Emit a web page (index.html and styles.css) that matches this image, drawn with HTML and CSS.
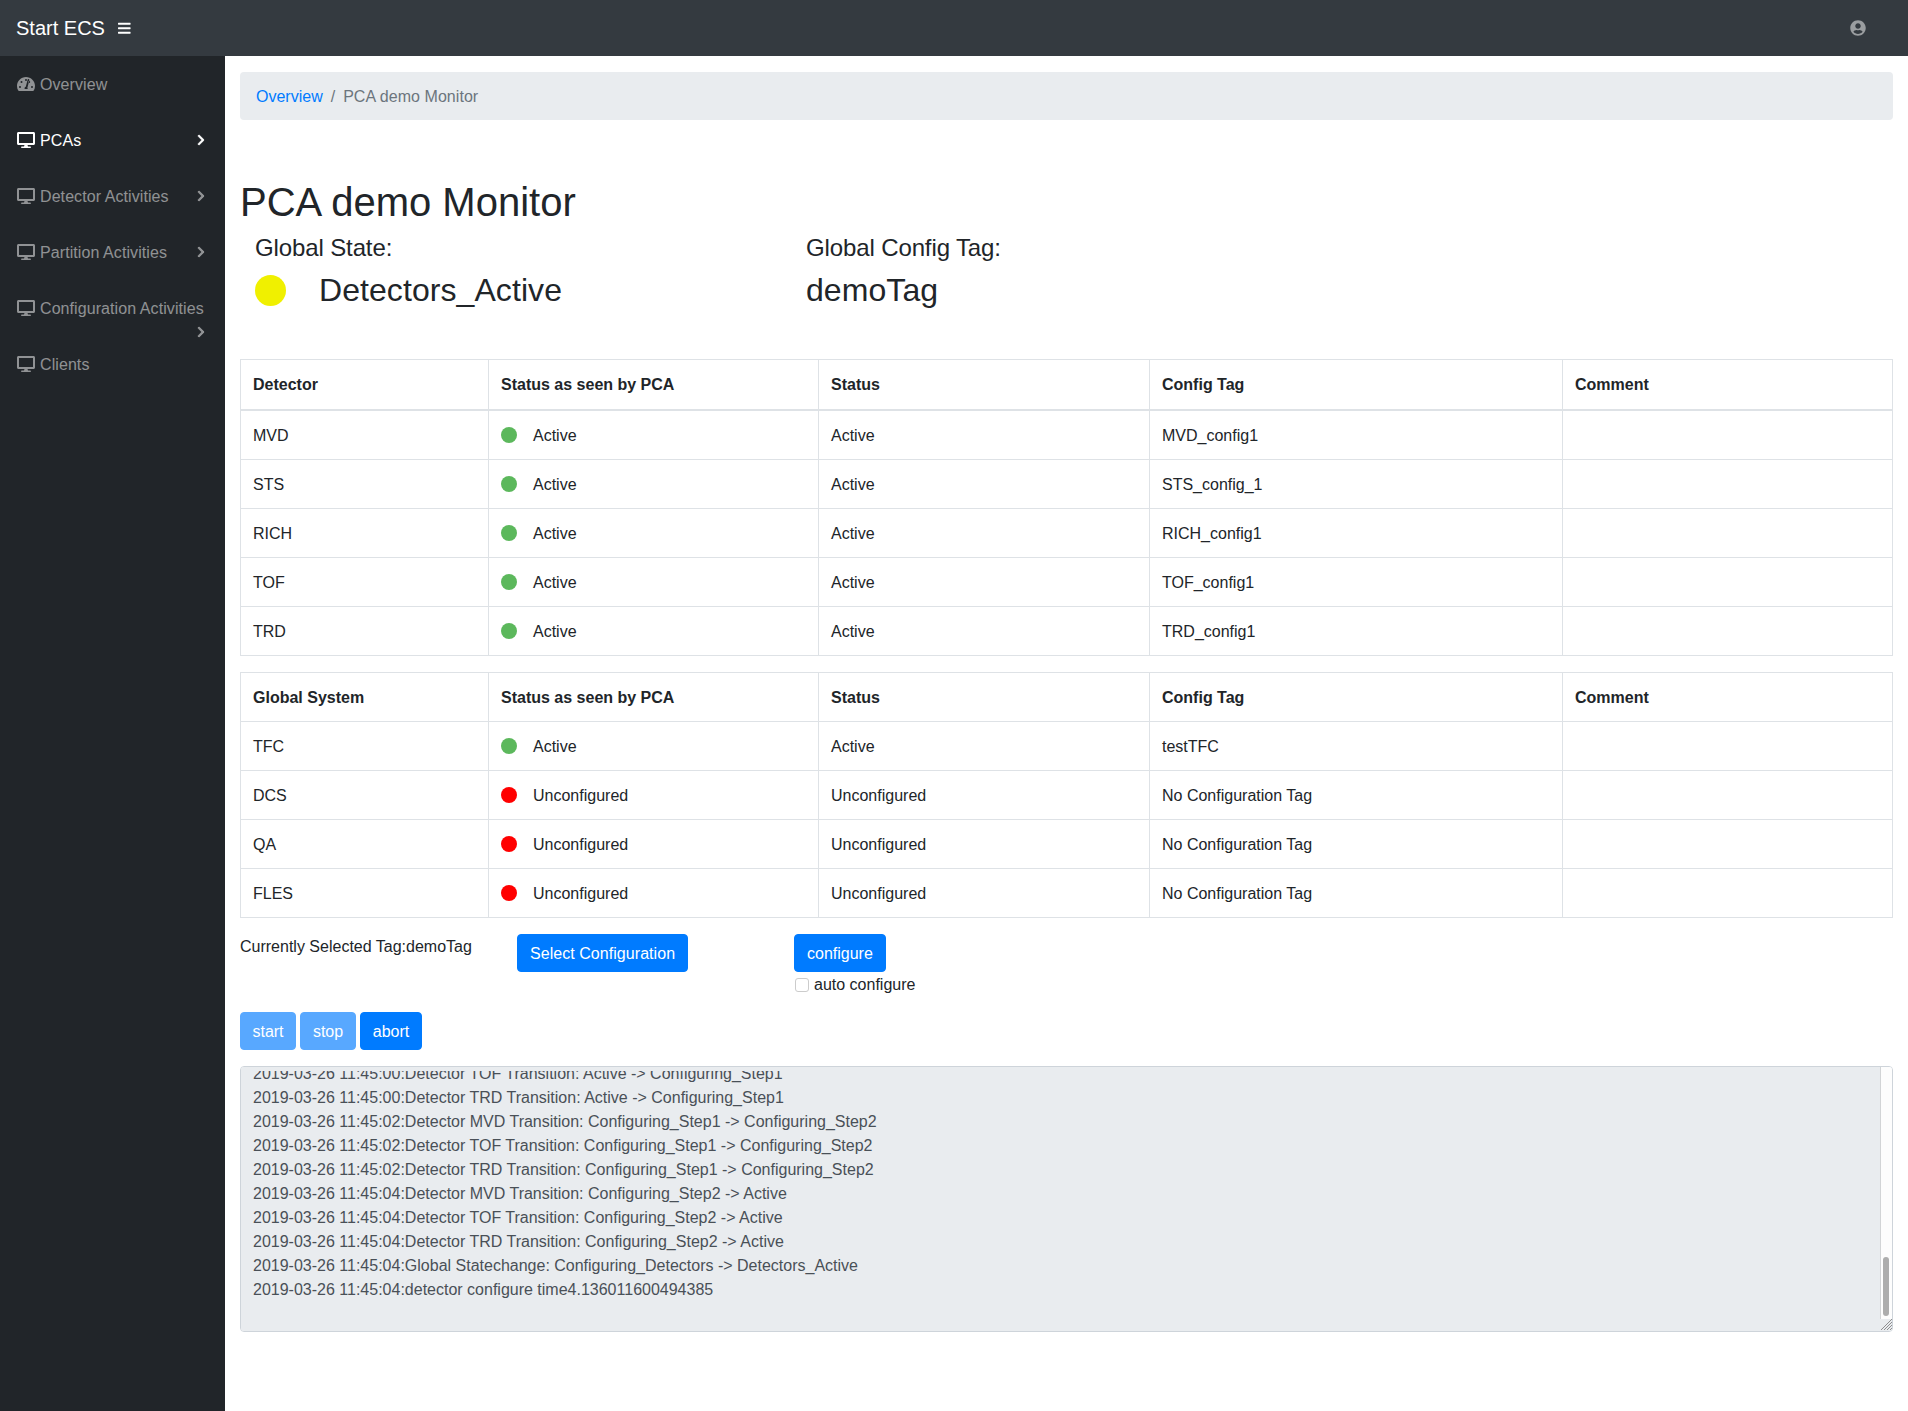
FILE: index.html
```html
<!DOCTYPE html>
<html lang="en">
<head>
<meta charset="utf-8">
<title>PCA demo Monitor</title>
<link rel="stylesheet" href="styles.css">
</head>
<body>
<nav class="topbar">
  <a class="brand" href="#">Start ECS</a>
  <svg class="bars" viewBox="0 0 448 512"><path d="M16 132h416c8.837 0 16-7.163 16-16V76c0-8.837-7.163-16-16-16H16C7.163 60 0 67.163 0 76v40c0 8.837 7.163 16 16 16zm0 160h416c8.837 0 16-7.163 16-16v-40c0-8.837-7.163-16-16-16H16c-8.837 0-16 7.163-16 16v40c0 8.837 7.163 16 16 16zm0 160h416c8.837 0 16-7.163 16-16v-40c0-8.837-7.163-16-16-16H16c-8.837 0-16 7.163-16 16v40c0 8.837 7.163 16 16 16z"/></svg>
  <svg class="user" viewBox="0 0 496 512"><path d="M248 8C111 8 0 119 0 256s111 248 248 248 248-111 248-248S385 8 248 8zm0 96c48.600 0 88 39.400 88 88s-39.400 88-88 88-88-39.400-88-88 39.400-88 88-88zm0 344c-58.700 0-111.300-26.600-146.500-68.200 18.800-35.400 55.600-59.800 98.500-59.800 2.400 0 4.800.400 7.100 1.100 13 4.200 26.600 6.900 40.900 6.900 14.300 0 28-2.700 40.900-6.900 2.300-.700 4.700-1.100 7.100-1.100 42.900 0 79.700 24.400 98.500 59.800C359.300 421.400 306.700 448 248 448z"/></svg>
</nav>
<div class="shell">
  <aside class="sidebar">
    <a class="side-link" href="#"><span class="side-label"><svg class="side-icon" viewBox="0 0 576 512"><path fill-rule="evenodd" d="M288 32C129 32 0 161 0 320c0 53 14 102 39 145 6 10 16 15 27 15h444c11 0 22-5 27-15 25-43 39-92 39-145 0-159-129-288-288-288zm0 64a32 32 0 1 1 0 64 32 32 0 0 1 0-64zM96 384a32 32 0 1 1 0-64 32 32 0 0 1 0 64zm48-160a32 32 0 1 1 0-64 32 32 0 0 1 0 64zm247-72-61 230c14 14 18 35 11 34H245c-10-30 6-62 36-71l61-230c3-13 17-21 30-17 13 3 22 17 19 30zm-1 72a32 32 0 1 1 0-64 32 32 0 0 1 0 64zm90 160a32 32 0 1 1 0-64 32 32 0 0 1 0 64z"/></svg>Overview</span></a>
    <a class="side-link is-active" href="#"><span class="side-label"><svg class="side-icon" viewBox="0 0 576 512"><path d="M528 0H48C21.500 0 0 21.500 0 48v320c0 26.500 21.500 48 48 48h192l-16 48h-72c-13.300 0-24 10.700-24 24s10.700 24 24 24h272c13.300 0 24-10.700 24-24s-10.700-24-24-24h-72l-16-48h192c26.500 0 48-21.500 48-48V48c0-26.500-21.500-48-48-48zm-16 352H64V64h448v288z"/></svg>PCAs</span><svg class="chev" viewBox="0 0 320 512"><path d="M285.476 272.971L91.132 467.314c-9.373 9.373-24.569 9.373-33.941 0l-22.667-22.667c-9.357-9.357-9.375-24.522-.04-33.901L188.505 256 34.484 101.255c-9.335-9.379-9.317-24.544.04-33.901l22.667-22.667c9.373-9.373 24.569-9.373 33.941 0L285.475 239.030c9.373 9.372 9.373 24.568.001 33.941z"/></svg></a>
    <a class="side-link" href="#"><span class="side-label"><svg class="side-icon" viewBox="0 0 576 512"><path d="M528 0H48C21.500 0 0 21.500 0 48v320c0 26.500 21.500 48 48 48h192l-16 48h-72c-13.300 0-24 10.700-24 24s10.700 24 24 24h272c13.300 0 24-10.700 24-24s-10.700-24-24-24h-72l-16-48h192c26.500 0 48-21.500 48-48V48c0-26.500-21.500-48-48-48zm-16 352H64V64h448v288z"/></svg>Detector Activities</span><svg class="chev" viewBox="0 0 320 512"><path d="M285.476 272.971L91.132 467.314c-9.373 9.373-24.569 9.373-33.941 0l-22.667-22.667c-9.357-9.357-9.375-24.522-.04-33.901L188.505 256 34.484 101.255c-9.335-9.379-9.317-24.544.04-33.901l22.667-22.667c9.373-9.373 24.569-9.373 33.941 0L285.475 239.030c9.373 9.372 9.373 24.568.001 33.941z"/></svg></a>
    <a class="side-link" href="#"><span class="side-label"><svg class="side-icon" viewBox="0 0 576 512"><path d="M528 0H48C21.500 0 0 21.500 0 48v320c0 26.500 21.500 48 48 48h192l-16 48h-72c-13.300 0-24 10.700-24 24s10.700 24 24 24h272c13.300 0 24-10.700 24-24s-10.700-24-24-24h-72l-16-48h192c26.500 0 48-21.500 48-48V48c0-26.500-21.500-48-48-48zm-16 352H64V64h448v288z"/></svg>Partition Activities</span><svg class="chev" viewBox="0 0 320 512"><path d="M285.476 272.971L91.132 467.314c-9.373 9.373-24.569 9.373-33.941 0l-22.667-22.667c-9.357-9.357-9.375-24.522-.04-33.901L188.505 256 34.484 101.255c-9.335-9.379-9.317-24.544.04-33.901l22.667-22.667c9.373-9.373 24.569-9.373 33.941 0L285.475 239.030c9.373 9.372 9.373 24.568.001 33.941z"/></svg></a>
    <a class="side-link" href="#"><span class="side-label"><svg class="side-icon" viewBox="0 0 576 512"><path d="M528 0H48C21.500 0 0 21.500 0 48v320c0 26.500 21.500 48 48 48h192l-16 48h-72c-13.300 0-24 10.700-24 24s10.700 24 24 24h272c13.300 0 24-10.700 24-24s-10.700-24-24-24h-72l-16-48h192c26.500 0 48-21.500 48-48V48c0-26.500-21.500-48-48-48zm-16 352H64V64h448v288z"/></svg>Configuration Activities</span><svg class="chev" viewBox="0 0 320 512"><path d="M285.476 272.971L91.132 467.314c-9.373 9.373-24.569 9.373-33.941 0l-22.667-22.667c-9.357-9.357-9.375-24.522-.04-33.901L188.505 256 34.484 101.255c-9.335-9.379-9.317-24.544.04-33.901l22.667-22.667c9.373-9.373 24.569-9.373 33.941 0L285.475 239.030c9.373 9.372 9.373 24.568.001 33.941z"/></svg></a>
    <a class="side-link" href="#"><span class="side-label"><svg class="side-icon" viewBox="0 0 576 512"><path d="M528 0H48C21.500 0 0 21.500 0 48v320c0 26.500 21.500 48 48 48h192l-16 48h-72c-13.300 0-24 10.700-24 24s10.700 24 24 24h272c13.300 0 24-10.700 24-24s-10.700-24-24-24h-72l-16-48h192c26.500 0 48-21.500 48-48V48c0-26.500-21.500-48-48-48zm-16 352H64V64h448v288z"/></svg>Clients</span></a>
  </aside>
  <main class="content">
    <ol class="breadcrumb">
      <li><a href="#">Overview</a></li>
      <li class="crumb-sep">/</li>
      <li class="crumb-current">PCA demo Monitor</li>
    </ol>
    <h1 class="title">PCA demo Monitor</h1>
    <div class="state-row">
      <div class="state-col">
        <h4 class="state-label">Global State:</h4>
        <div class="state-value"><span class="state-dot"></span><span>Detectors_Active</span></div>
      </div>
      <div class="state-col">
        <h4 class="state-label">Global Config Tag:</h4>
        <div class="state-value"><span>demoTag</span></div>
      </div>
    </div>

    <table class="grid-table">
      <colgroup><col class="c1"><col class="c2"><col class="c3"><col class="c4"><col></colgroup>
      <thead>
        <tr><th>Detector</th><th>Status as seen by PCA</th><th>Status</th><th>Config Tag</th><th>Comment</th></tr>
      </thead>
      <tbody>
        <tr><td>MVD</td><td><span class="dot dot-ok"></span>Active</td><td>Active</td><td>MVD_config1</td><td></td></tr>
        <tr><td>STS</td><td><span class="dot dot-ok"></span>Active</td><td>Active</td><td>STS_config_1</td><td></td></tr>
        <tr><td>RICH</td><td><span class="dot dot-ok"></span>Active</td><td>Active</td><td>RICH_config1</td><td></td></tr>
        <tr><td>TOF</td><td><span class="dot dot-ok"></span>Active</td><td>Active</td><td>TOF_config1</td><td></td></tr>
        <tr><td>TRD</td><td><span class="dot dot-ok"></span>Active</td><td>Active</td><td>TRD_config1</td><td></td></tr>
      </tbody>
    </table>

    <table class="grid-table">
      <colgroup><col class="c1"><col class="c2"><col class="c3"><col class="c4"><col></colgroup>
      <tbody>
        <tr><th>Global System</th><th>Status as seen by PCA</th><th>Status</th><th>Config Tag</th><th>Comment</th></tr>
        <tr><td>TFC</td><td><span class="dot dot-ok"></span>Active</td><td>Active</td><td>testTFC</td><td></td></tr>
        <tr><td>DCS</td><td><span class="dot dot-bad"></span>Unconfigured</td><td>Unconfigured</td><td>No Configuration Tag</td><td></td></tr>
        <tr><td>QA</td><td><span class="dot dot-bad"></span>Unconfigured</td><td>Unconfigured</td><td>No Configuration Tag</td><td></td></tr>
        <tr><td>FLES</td><td><span class="dot dot-bad"></span>Unconfigured</td><td>Unconfigured</td><td>No Configuration Tag</td><td></td></tr>
      </tbody>
    </table>

    <div class="config-row">
      <div class="selected-tag">Currently Selected Tag:demoTag</div>
      <div><button class="btn btn-select" type="button">Select Configuration</button></div>
      <div>
        <button class="btn" type="button">configure</button>
        <label class="auto"><input class="auto-box" type="checkbox">auto configure</label>
      </div>
    </div>

    <div class="actions">
      <button class="btn btn-off" type="button">start</button>
      <button class="btn btn-off" type="button">stop</button>
      <button class="btn btn-abort" type="button">abort</button>
    </div>

    <div class="log-wrap">
      <textarea id="log" class="log" readonly>2019-03-26 11:42:10:Global Statechange: Idle -> Connecting
2019-03-26 11:42:11:Detector MVD Transition: Idle -> Connecting
2019-03-26 11:42:11:Detector STS Transition: Idle -> Connecting
2019-03-26 11:42:11:Detector RICH Transition: Idle -> Connecting
2019-03-26 11:42:11:Detector TOF Transition: Idle -> Connecting
2019-03-26 11:42:11:Detector TRD Transition: Idle -> Connecting
2019-03-26 11:42:12:Detector MVD Transition: Connecting -> Unconfigured
2019-03-26 11:42:12:Detector STS Transition: Connecting -> Unconfigured
2019-03-26 11:42:12:Detector RICH Transition: Connecting -> Unconfigured
2019-03-26 11:42:12:Detector TOF Transition: Connecting -> Unconfigured
2019-03-26 11:42:12:Detector TRD Transition: Connecting -> Unconfigured
2019-03-26 11:44:30:Global Statechange: Unconfigured -> Configuring_TFC
2019-03-26 11:44:32:Global System TFC Transition: Unconfigured -> Active
2019-03-26 11:44:40:Global Statechange: Configuring_TFC -> Configuring_Detectors
2019-03-26 11:44:40:Detector MVD Transition: Unconfigured -> Active
2019-03-26 11:44:40:Detector STS Transition: Unconfigured -> Active
2019-03-26 11:44:40:Detector RICH Transition: Unconfigured -> Active
2019-03-26 11:44:40:Detector TOF Transition: Unconfigured -> Active
2019-03-26 11:44:40:Detector TRD Transition: Unconfigured -> Active
2019-03-26 11:44:42:Global Statechange: Configuring_Detectors -> Detectors_Active
2019-03-26 11:44:42:detector configure time2.100000000000000
2019-03-26 11:44:58:Global Statechange: Detectors_Active -> Configuring_Detectors
2019-03-26 11:44:58:Detector STS Transition: Active -> Active
2019-03-26 11:44:58:Detector RICH Transition: Active -> Active
2019-03-26 11:44:59:Detector STS Transition: Active -> Active
2019-03-26 11:44:59:Detector RICH Transition: Active -> Active
2019-03-26 11:44:59:Detector STS Transition: Active -> Active
2019-03-26 11:44:59:Detector RICH Transition: Active -> Active
2019-03-26 11:44:59:Detector STS Transition: Active -> Active
2019-03-26 11:44:59:Detector RICH Transition: Active -> Active
2019-03-26 11:45:00:Detector MVD Transition: Active -> Configuring_Step1
2019-03-26 11:45:00:Detector STS Transition: Active -> Active
2019-03-26 11:45:00:Detector RICH Transition: Active -> Active
2019-03-26 11:45:00:Detector TOF Transition: Active -> Configuring_Step1
2019-03-26 11:45:00:Detector TRD Transition: Active -> Configuring_Step1
2019-03-26 11:45:02:Detector MVD Transition: Configuring_Step1 -> Configuring_Step2
2019-03-26 11:45:02:Detector TOF Transition: Configuring_Step1 -> Configuring_Step2
2019-03-26 11:45:02:Detector TRD Transition: Configuring_Step1 -> Configuring_Step2
2019-03-26 11:45:04:Detector MVD Transition: Configuring_Step2 -> Active
2019-03-26 11:45:04:Detector TOF Transition: Configuring_Step2 -> Active
2019-03-26 11:45:04:Detector TRD Transition: Configuring_Step2 -> Active
2019-03-26 11:45:04:Global Statechange: Configuring_Detectors -> Detectors_Active
2019-03-26 11:45:04:detector configure time4.136011600494385
</textarea>
      <div class="log-track"><div class="log-thumb"></div></div>
      <svg class="log-grip" viewBox="0 0 11 11"><path d="M0 11 11 0M3 11l8-8M6 11l5-5M9 11l2-2"/></svg>
    </div>
  </main>
</div>
<script src="app.js"></script>
</body>
</html>
```

FILE: styles.css
```css
* { box-sizing: border-box; }
html, body { margin: 0; height: 100%; }
body {
  font-family: "Liberation Sans", Arial, sans-serif;
  font-size: 16px;
  line-height: 24px;
  color: #212529;
  background: #fff;
  display: flex;
  flex-direction: column;
  min-height: 1411px;
}
.topbar {
  height: 56px;
  flex: none;
  background: #343a40;
  display: flex;
  align-items: center;
  padding: 0 42px 0 16px;
}
.brand { color: #fff; font-size: 20px; text-decoration: none; }
.bars { width: 12.6px; height: 14.4px; margin-left: 13.5px; fill: #fff; }
.user { width: 16px; height: 16px; margin-left: auto; fill: rgba(255,255,255,.5); }
.shell { flex: 1; display: flex; }
.sidebar { width: 225px; flex: none; background: #212529; }
.side-link {
  display: flex;
  flex-wrap: wrap;
  align-items: center;
  align-content: flex-start;
  width: 220px;
  height: 56px;
  padding: 16px;
  color: rgba(255,255,255,.5);
  text-decoration: none;
  fill: currentColor;
}
.side-link.is-active { color: #fff; }
.side-label { display: flex; align-items: center; height: 24px; padding-top: 2px; letter-spacing: .08px; }
.side-icon { width: 18px; height: 16px; margin: -2px 5px 0 1px; flex: none; }
.chev { width: 8px; height: 12px; margin: 6px -1px 6px auto; flex: none; stroke: currentColor; stroke-width: 16px; }
.content { flex: 1; min-width: 0; padding: 16px 15px; }
.breadcrumb {
  list-style: none;
  display: flex;
  margin: 0 0 58px;
  padding: 13px 16px 11px;
  height: 48px;
  background: #e9ecef;
  border-radius: 4px;
}
.breadcrumb a { color: #007bff; text-decoration: none; }
.crumb-sep { padding: 0 8px; color: #6c757d; }
.crumb-current { color: #6c757d; letter-spacing: .05px; }
.title { margin: 0 0 8px; font-size: 40px; line-height: 48px; font-weight: 500; }
.state-row { display: grid; grid-template-columns: 551px 1fr; margin-bottom: 50px; }
.state-col { padding-left: 15px; }
.state-label { margin: 0 0 8px; font-size: 24px; line-height: 28.8px; font-weight: 500; letter-spacing: -.12px; }
.state-value { display: flex; align-items: center; font-size: 32px; line-height: 38.4px; letter-spacing: .07px; }
.state-dot { width: 31px; height: 31px; border-radius: 50%; background: #f0f000; margin-right: 33px; }
.grid-table {
  width: 100%;
  table-layout: fixed;
  border-collapse: collapse;
  margin-bottom: 16px;
}
.c1 { width: 248px; }
.c2 { width: 330px; }
.c3 { width: 331px; }
.c4 { width: 413px; }
.grid-table th, .grid-table td {
  border: 1px solid #dee2e6;
  padding: 13px 12px 11px;
  height: 49px;
  text-align: left;
  vertical-align: top;
}
.grid-table th { font-weight: 700; }
.grid-table thead th { border-bottom-width: 2px; height: 50px; }
.dot {
  display: inline-block;
  width: 16px;
  height: 16px;
  border-radius: 50%;
  margin-right: 16px;
  vertical-align: -2px;
}
.dot-ok { background: #5cb85c; }
.dot-bad { background: #f00; }
.config-row { display: grid; grid-template-columns: 277px 277px 1fr; margin-bottom: 16px; }
.selected-tag { padding-top: 1px; }
.btn {
  display: inline-block;
  height: 38px;
  padding: 7px 12px 5px;
  border: 1px solid #007bff;
  border-radius: 4px;
  background: #007bff;
  color: #fff;
  font: 16px/24px "Liberation Sans", Arial, sans-serif;
}
.btn-select { letter-spacing: .05px; }
.btn-off { opacity: .65; }
.auto { display: flex; align-items: center; padding-top: 2px; height: 24px; }
.auto-box {
  appearance: none;
  width: 14px;
  height: 14px;
  margin: 0 5px 0 1px;
  background: #fff;
  border: 1px solid #ccc;
  border-radius: 3px;
}
.actions { display: flex; gap: 4px; height: 38px; margin-bottom: 16px; }
.actions .btn { width: 56px; padding: 7px 0 5px; }
.actions .btn-abort { width: 62px; }
.log-wrap { position: relative; height: 266px; }
.log-wrap::before {
  content: "";
  position: absolute;
  top: 1px;
  left: 1px;
  right: 14px;
  height: 4px;
  background: #e9ecef;
  border-radius: 3px 0 0 0;
}
.log {
  display: block;
  width: 100%;
  height: 100%;
  padding: 6px 12px 5px;
  border: 1px solid #ced4da;
  border-radius: 4px;
  background: #e9ecef;
  color: #495057;
  font: 16px/24px "Liberation Sans", Arial, sans-serif;
  overflow-y: scroll;
  resize: none;
  outline: none;
}
.log-track {
  position: absolute;
  top: 1px;
  right: 1px;
  bottom: 13px;
  width: 12px;
  background: #fdfdfd;
  border-left: 1px solid #d2d4d6;
  border-top-right-radius: 3px;
}
.log-thumb {
  position: absolute;
  right: 3px;
  bottom: 3px;
  width: 6px;
  height: 59px;
  border-radius: 3px;
  background: #adadad;
}
.log-grip {
  position: absolute;
  right: 1px;
  bottom: 2px;
  width: 11px;
  height: 11px;
  fill: none;
  stroke: #777;
  stroke-width: .8px;
}
```

FILE: app.js
```js
var log = document.getElementById('log');
log.scrollTop = log.scrollHeight;
```
